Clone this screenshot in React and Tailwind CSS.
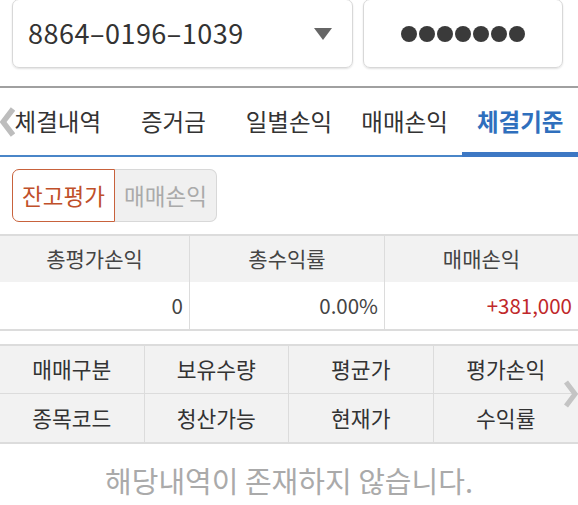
import React from "react";

const tabs = ["체결내역", "증거금", "일별손익", "매매손익", "체결기준"];
const summary = [
  { label: "총평가손익", value: "0" },
  { label: "총수익률", value: "0.00%" },
  { label: "매매손익", value: "+381,000", red: true },
];
const gridRows = [
  ["매매구분", "보유수량", "평균가", "평가손익"],
  ["종목코드", "청산가능", "현재가", "수익률"],
];

const App = () => {
  return (
    <div className="w-[578px] h-[505px] overflow-hidden bg-white text-[#333] font-['Noto_Sans_CJK_KR','Noto_Sans',sans-serif]">
      {/* account row */}
      <div className="flex gap-[10px] px-[12px] h-[86px] pt-0">
        <div className="w-[341px] h-[69px] -mt-[1px] flex items-center justify-between pl-[15px] pr-[20px] border border-[#d8d8d8] rounded-[7px] shadow-[0_1px_2px_rgba(0,0,0,0.12)]">
          <span className="text-[27px] tracking-[0.5px] text-[#333]">8864–0196–1039</span>
          <svg width="18" height="12" viewBox="0 0 18 12">
            <polygon points="0,0 18,0 9,12" fill="#666" />
          </svg>
        </div>
        <div className="w-[200px] h-[69px] -mt-[1px] flex items-center justify-center gap-[2px] border border-[#d8d8d8] rounded-[7px] shadow-[0_1px_2px_rgba(0,0,0,0.12)]">
          {Array.from({ length: 7 }).map((_, i) => (
            <span key={i} className="w-[16px] h-[16px] rounded-full bg-[#3a3a3a]" />
          ))}
        </div>
      </div>
      <div className="h-[2px] bg-[#a0a0a0]" />

      {/* tabs */}
      <div className="relative flex h-[69px] border-b-[2px] border-[#4a86c8]">
        <svg className="absolute left-0 top-[19px]" width="15" height="30" viewBox="0 0 15 30">
          <polyline points="13,2 3,15 13,28" fill="none" stroke="#bdbdbd" strokeWidth="5.5" />
        </svg>
        {tabs.map((t, i) => (
          <div
            key={t}
            className={
              i === 4
                ? "flex-1 flex items-center justify-center text-[23.5px] font-bold text-[#2f6fbd] relative"
                : "flex-1 flex items-center justify-center text-[23.5px] text-[#333]"
            }
          >
            {t}
            {i === 4 && <div className="absolute left-0 right-0 -bottom-[2px] h-[5px] bg-[#3d78c4]" />}
          </div>
        ))}
      </div>

      {/* toggle */}
      <div className="flex px-[12px] pt-[12px] h-[77px]">
        <div className="w-[103px] h-[53px] flex items-center justify-center border border-[#c8623c] rounded-l-[7px] text-[22.5px] text-[#c0502a] bg-white">
          잔고평가
        </div>
        <div className="w-[102px] h-[53px] flex items-center justify-center border border-l-0 border-[#d8d8d8] rounded-r-[7px] text-[22.5px] text-[#aaa] bg-[#f0f0f0]">
          매매손익
        </div>
      </div>

      {/* summary */}
      <div className="border-t-[2px] border-b-[2px] border-[#dcdcdc]">
        <div className="grid grid-cols-[190px_195px_193px] h-[46px] bg-[#f2f2f2]">
          {summary.map((s, i) => (
            <div key={s.label} className={`flex items-center justify-center text-[21px] text-[#444] ${i < 2 ? "border-r border-[#dcdcdc]" : ""}`}>
              {s.label}
            </div>
          ))}
        </div>
        <div className="grid grid-cols-[190px_195px_193px] h-[47px]">
          {summary.map((s, i) => (
            <div
              key={s.label}
              className={`flex items-center justify-end pr-[6px] text-[20.5px] ${s.red ? "text-[#c0282a]" : "text-[#444]"} ${i < 2 ? "border-r border-[#dcdcdc]" : ""}`}
            >
              {s.value}
            </div>
          ))}
        </div>
      </div>

      {/* grid */}
      <div className="relative mt-[13px] border-t-[2px] border-b-[2px] border-[#dcdcdc] bg-[#f2f2f2]">
        {gridRows.map((row, r) => (
          <div key={r} className={`grid grid-cols-4 h-[48px] ${r === 0 ? "border-b border-[#dcdcdc]" : ""}`}>
            {row.map((c, i) => (
              <div key={c} className={`flex items-center justify-center text-[21.5px] text-[#333] ${i < 3 ? "border-r border-[#dcdcdc]" : ""}`}>
                {c}
              </div>
            ))}
          </div>
        ))}
        <svg className="absolute right-0 top-[34px]" width="14" height="28" viewBox="0 0 14 28">
          <polyline points="2,2 11,14 2,26" fill="none" stroke="#c4c4c4" strokeWidth="5" />
        </svg>
      </div>

      <div className="flex justify-center pt-[15px] text-[29px] text-[#aaa]">해당내역이 존재하지 않습니다.</div>
    </div>
  );
};

export default App;
